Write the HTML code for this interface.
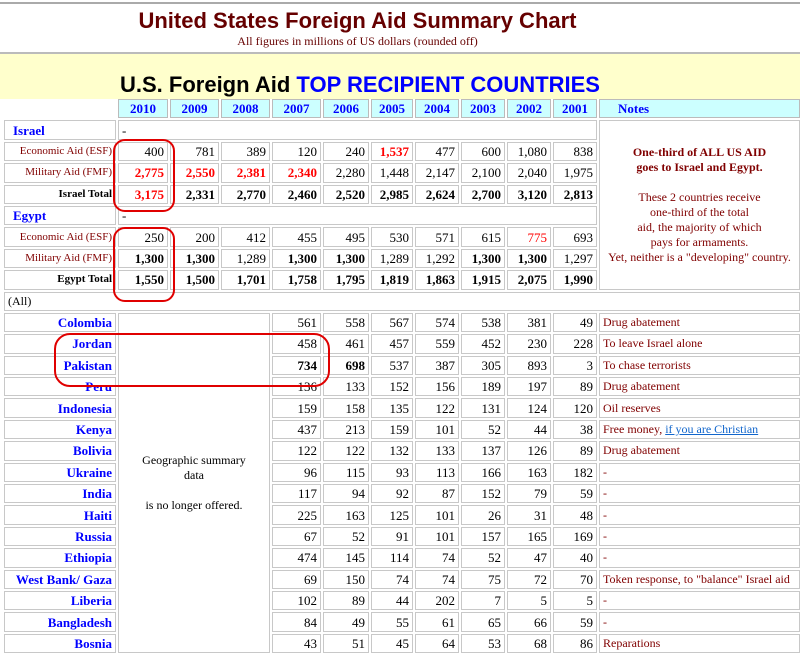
<!DOCTYPE html>
<html><head><meta charset="utf-8"><style>
body{margin:0;width:800px;height:655px;overflow:hidden;background:#fff;font-family:"Liberation Serif",serif;position:relative}
.t1{position:absolute;top:8px;left:0;width:715px;text-align:center;font:bold 22px "Liberation Sans",sans-serif;color:#660000}
.t2{position:absolute;top:34px;left:0;width:715px;text-align:center;font-size:12px;color:#660000}
.band{position:absolute;top:52px;left:0;width:800px;height:45px;background:#ffffcc;border-top:2px solid #bbb}
.topline{position:absolute;top:2px;left:0;width:800px;height:2px;background:#aaa}
.h{position:absolute;top:72px;left:120px;font:bold 22px "Liberation Sans",sans-serif;color:#000;white-space:nowrap}
.h span{color:#0000ff}
table{position:absolute;top:97px;left:2px;border-collapse:separate;border-spacing:2px;table-layout:fixed;width:800px;font-size:13px}
td{border:1px solid #c8c8c8;padding:0 3px;height:17.4px;line-height:17px;text-align:right;white-space:nowrap;overflow:hidden}
td.n{border:none}
.hd td{background:#ccffff;color:#0000ff;font-weight:bold;text-align:center;border-color:#bbb}
.hd td.notes{text-align:left;padding-left:18px}
.lb{text-align:left;color:#0000ff;font-weight:bold;padding-left:8px}
.sl{color:#800000;font-size:11px}
.tot{font-weight:bold;font-size:11px;color:#000}
.r{color:#ff0000}.b{font-weight:bold}
.c{text-align:right;color:#0000ff;font-weight:bold}
.nt{text-align:left;color:#800000;font-size:12px}
.big{color:#800000;text-align:center;white-space:nowrap;line-height:15px;font-size:12px}
.geo{text-align:center;white-space:normal;vertical-align:middle;line-height:15px;font-size:12px}
a{color:#1166cc;text-decoration:underline}
.ov{position:absolute;border:2px solid #e00000;border-radius:12px}
</style></head><body>
<div class="topline"></div>
<div class="t1">United States Foreign Aid Summary Chart</div>
<div class="t2">All figures in millions of US dollars (rounded off)</div>
<div class="band"></div>
<div class="h">U.S. Foreign Aid <span>TOP RECIPIENT COUNTRIES</span></div>
<table>
<colgroup><col style="width:112px"><col style="width:50px"><col style="width:49px"><col style="width:49px"><col style="width:49px"><col style="width:46px"><col style="width:42px"><col style="width:44px"><col style="width:44px"><col style="width:44px"><col style="width:44px"><col></colgroup>
<tr class="hd"><td class="n" style="background:#fff"></td><td>2010</td><td>2009</td><td>2008</td><td>2007</td><td>2006</td><td>2005</td><td>2004</td><td>2003</td><td>2002</td><td>2001</td><td class="notes">Notes</td></tr>
<tr><td class="lb">Israel</td><td colspan="10" style="text-align:left">-</td><td rowspan="8" class="big"><b>One-third of ALL US AID<br>goes to Israel and Egypt.</b><br><br>These 2 countries receive<br>one-third of the total<br>aid, the majority of which<br>pays for armaments.<br>Yet, neither is a "developing" country.</td></tr>
<tr><td class="sl">Economic Aid (ESF)</td><td>400</td><td>781</td><td>389</td><td>120</td><td>240</td><td class="r b">1,537</td><td>477</td><td>600</td><td>1,080</td><td>838</td></tr>
<tr><td class="sl">Military Aid (FMF)</td><td class="r b">2,775</td><td class="r b">2,550</td><td class="r b">2,381</td><td class="r b">2,340</td><td>2,280</td><td>1,448</td><td>2,147</td><td>2,100</td><td>2,040</td><td>1,975</td></tr>
<tr class="b"><td class="tot">Israel Total</td><td class="r">3,175</td><td>2,331</td><td>2,770</td><td>2,460</td><td>2,520</td><td>2,985</td><td>2,624</td><td>2,700</td><td>3,120</td><td>2,813</td></tr>
<tr><td class="lb">Egypt</td><td colspan="10" style="text-align:left">-</td></tr>
<tr><td class="sl">Economic Aid (ESF)</td><td>250</td><td>200</td><td>412</td><td>455</td><td>495</td><td>530</td><td>571</td><td>615</td><td class="r">775</td><td>693</td></tr>
<tr><td class="sl">Military Aid (FMF)</td><td class="b">1,300</td><td class="b">1,300</td><td>1,289</td><td class="b">1,300</td><td class="b">1,300</td><td>1,289</td><td>1,292</td><td class="b">1,300</td><td class="b">1,300</td><td>1,297</td></tr>
<tr class="b"><td class="tot">Egypt Total</td><td>1,550</td><td>1,500</td><td>1,701</td><td>1,758</td><td>1,795</td><td>1,819</td><td>1,863</td><td>1,915</td><td>2,075</td><td>1,990</td></tr>
<tr><td colspan="12" style="text-align:left;padding-left:3px;font-size:12px">(All)</td></tr>
<tr><td class="c">Colombia</td><td colspan="3" rowspan="16" class="geo">Geographic summary<br>data<br><br>is no longer offered.</td><td>561</td><td>558</td><td>567</td><td>574</td><td>538</td><td>381</td><td>49</td><td class="nt">Drug abatement</td></tr>
<tr><td class="c">Jordan</td><td>458</td><td>461</td><td>457</td><td>559</td><td>452</td><td>230</td><td>228</td><td class="nt">To leave Israel alone</td></tr>
<tr><td class="c">Pakistan</td><td class="b">734</td><td class="b">698</td><td>537</td><td>387</td><td>305</td><td>893</td><td>3</td><td class="nt">To chase terrorists</td></tr>
<tr><td class="c">Peru</td><td>136</td><td>133</td><td>152</td><td>156</td><td>189</td><td>197</td><td>89</td><td class="nt">Drug abatement</td></tr>
<tr><td class="c">Indonesia</td><td>159</td><td>158</td><td>135</td><td>122</td><td>131</td><td>124</td><td>120</td><td class="nt">Oil reserves</td></tr>
<tr><td class="c">Kenya</td><td>437</td><td>213</td><td>159</td><td>101</td><td>52</td><td>44</td><td>38</td><td class="nt">Free money, <a>if you are Christian</a></td></tr>
<tr><td class="c">Bolivia</td><td>122</td><td>122</td><td>132</td><td>133</td><td>137</td><td>126</td><td>89</td><td class="nt">Drug abatement</td></tr>
<tr><td class="c">Ukraine</td><td>96</td><td>115</td><td>93</td><td>113</td><td>166</td><td>163</td><td>182</td><td class="nt">-</td></tr>
<tr><td class="c">India</td><td>117</td><td>94</td><td>92</td><td>87</td><td>152</td><td>79</td><td>59</td><td class="nt">-</td></tr>
<tr><td class="c">Haiti</td><td>225</td><td>163</td><td>125</td><td>101</td><td>26</td><td>31</td><td>48</td><td class="nt">-</td></tr>
<tr><td class="c">Russia</td><td>67</td><td>52</td><td>91</td><td>101</td><td>157</td><td>165</td><td>169</td><td class="nt">-</td></tr>
<tr><td class="c">Ethiopia</td><td>474</td><td>145</td><td>114</td><td>74</td><td>52</td><td>47</td><td>40</td><td class="nt">-</td></tr>
<tr><td class="c">West Bank/ Gaza</td><td>69</td><td>150</td><td>74</td><td>74</td><td>75</td><td>72</td><td>70</td><td class="nt">Token response, to "balance" Israel aid</td></tr>
<tr><td class="c">Liberia</td><td>102</td><td>89</td><td>44</td><td>202</td><td>7</td><td>5</td><td>5</td><td class="nt">-</td></tr>
<tr><td class="c">Bangladesh</td><td>84</td><td>49</td><td>55</td><td>61</td><td>65</td><td>66</td><td>59</td><td class="nt">-</td></tr>
<tr><td class="c">Bosnia</td><td>43</td><td>51</td><td>45</td><td>64</td><td>53</td><td>68</td><td>86</td><td class="nt">Reparations</td></tr>
</table>
<div class="ov" style="left:113px;top:139px;width:58px;height:69px"></div>
<div class="ov" style="left:113px;top:227px;width:58px;height:71px"></div>
<div class="ov" style="left:54px;top:333px;width:272px;height:50px;border-radius:16px"></div>
</body></html>
